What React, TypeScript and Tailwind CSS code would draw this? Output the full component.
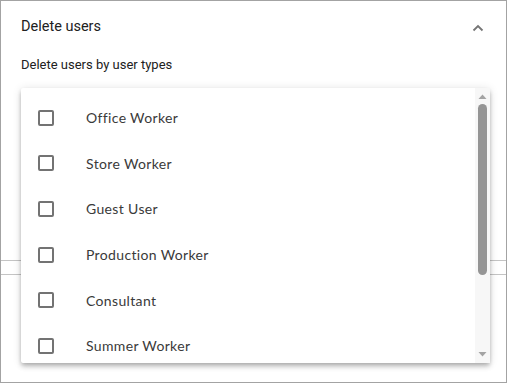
import { useState } from "react";

const userTypes = [
	"Office Worker",
	"Store Worker",
	"Guest User",
	"Production Worker",
	"Consultant",
	"Summer Worker",
];

const App = () => {
	const [checked, setChecked] = useState<string[]>([]);

	const toggle = (type: string) => {
		setChecked((prev) =>
			prev.includes(type) ? prev.filter((t) => t !== type) : [...prev, type]
		);
	};

	return (
		<div className="relative w-[507px] h-[383px] overflow-hidden bg-white border border-[#a3a3a3] font-['Roboto',sans-serif]">
			{/* Panel header */}
			<div className="flex items-center justify-between pl-[20px] pr-[22px] pt-[15px] h-[36px]">
				<span className="text-[14.5px] leading-[20px] text-[#212121]">Delete users</span>
				<svg width="12" height="8" viewBox="0 0 12 8" className="mt-[2px]">
					<path d="M1.5 6.5 L6 2 L10.5 6.5" fill="none" stroke="#757575" strokeWidth="1.8" />
				</svg>
			</div>

			<div className="pl-[20px] pt-[20px] text-[13px] leading-[16px] text-[#212121]">
				Delete users by user types
			</div>

			{/* fields below, hidden by the open menu */}
			<div className="mt-[187px] border-t border-[#c4c4c4]" />
			<div className="mt-[13px] border-t border-[#c4c4c4]" />

			{/* Open select menu */}
			<div className="absolute left-[20px] top-[87px] w-[469px] h-[275px] flex bg-white rounded-[2px] shadow-[0_2px_4px_-1px_rgba(0,0,0,0.2),0_4px_5px_0_rgba(0,0,0,0.14),0_1px_10px_0_rgba(0,0,0,0.12)]">
				<ul className="flex-1 pt-[7px] font-['Lato',sans-serif]">
					{userTypes.map((type) => (
						<li
							key={type}
							onClick={() => toggle(type)}
							className="flex items-center h-[45.6px] pl-[17px] cursor-pointer"
						>
							<span className="w-[16px] h-[16px] border-2 border-[#737373] rounded-[2px] flex items-center justify-center">
								{checked.includes(type) && <span className="w-[8px] h-[8px] bg-[#737373]" />}
							</span>
							<span className="ml-[32px] text-[14px] text-[#3a3a3a] tracking-[0.35px]">{type}</span>
						</li>
					))}
				</ul>

				{/* scrollbar */}
				<div className="w-[15px] h-full bg-[#f7f7f7] flex flex-col items-center">
					<svg width="9" height="5" viewBox="0 0 9 5" className="mt-[6px]">
						<path d="M0.5 5 L4.5 0.5 L8.5 5 Z" fill="#a3a3a3" />
					</svg>
					<div className="mt-[5px] w-[9px] h-[171px] rounded-full bg-[#959595]" />
					<div className="flex-1" />
					<svg width="9" height="5" viewBox="0 0 9 5" className="mb-[6px]">
						<path d="M0.5 0 L4.5 4.5 L8.5 0 Z" fill="#a3a3a3" />
					</svg>
				</div>
			</div>
		</div>
	);
};

export default App;
